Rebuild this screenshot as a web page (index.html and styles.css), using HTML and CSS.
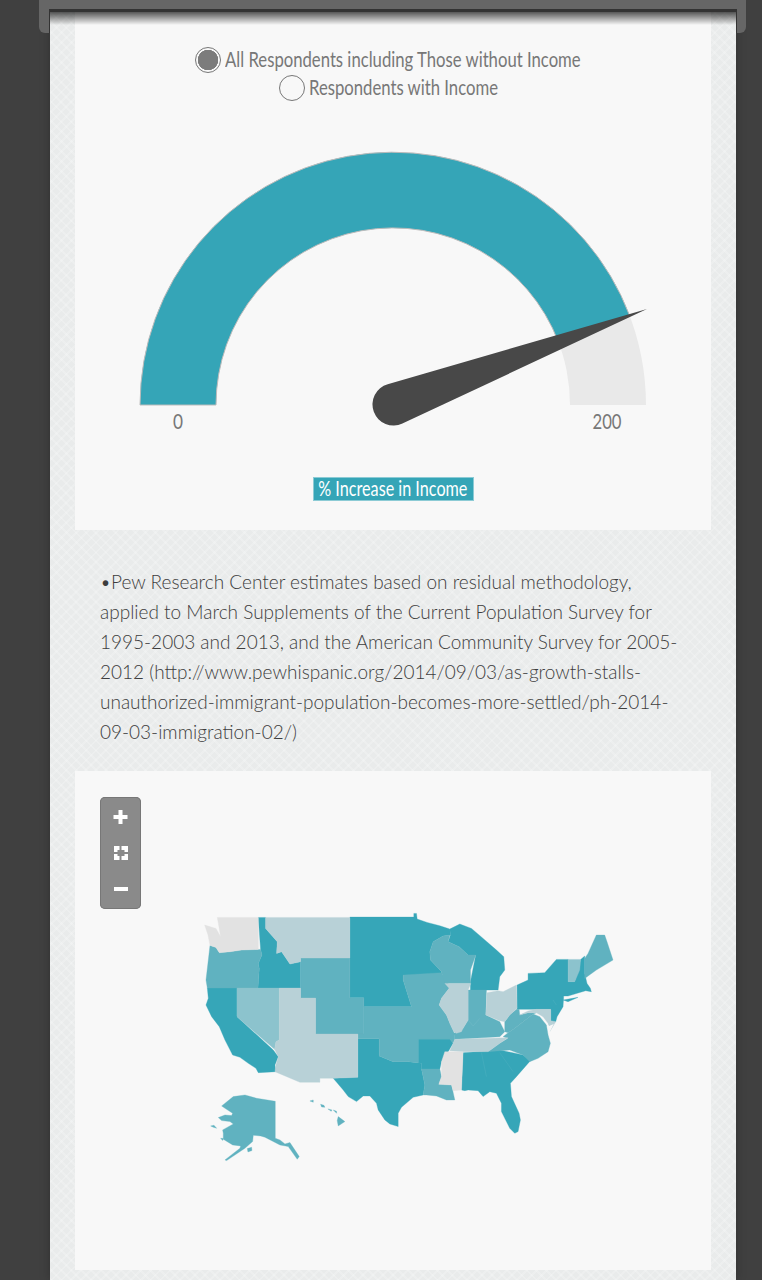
FILE: index.html
```html
<!DOCTYPE html>
<html lang="en">
<head>
    <meta charset="UTF-8">
    <meta name="viewport" content="width=device-width, initial-scale=1.0">
    <title>Immigration and Income</title>
    <link rel="stylesheet" href="styles.css">
</head>
<body>
    <div class="topbar"><div class="topbar-slot"></div></div>

    <div class="paper">
        <div class="card gauge-card">
            <form class="radios">
                <label><input type="radio" name="group" checked><span class="radio-text wide">All Respondents including Those without Income</span></label>
                <label><input type="radio" name="group"><span class="radio-text short">Respondents with Income</span></label>
            </form>
            <svg class="gauge" viewBox="75 102 636 364">
                <path class="gauge-track" d="M140 405A253 253 0 0 1 646 405H570A177 177 0 0 0 216 405Z"/>
                <path class="gauge-value" d="M140 405A253 253 0 0 1 629.6 315.6L558.6 342.4A177 177 0 0 0 216 405Z"/>
                <path class="gauge-needle" d="M647 309L387.700 384.300A21 21 0 1 0 402.400 423.500Z"/>
                <text class="gauge-label" x="178" y="429" textLength="10" lengthAdjust="spacingAndGlyphs">0</text>
                <text class="gauge-label" x="607" y="429" textLength="29" lengthAdjust="spacingAndGlyphs">200</text>
            </svg>
            <div class="gauge-title"><span>% Increase in Income</span></div>
        </div>

        <p class="source">•Pew Research Center estimates based on residual methodology, applied to March Supplements of the Current Population Survey for 1995-2003 and 2013, and the American Community Survey for 2005-2012 (http://www.pewhispanic.org/2014/09/03/as-growth-stalls-unauthorized-immigrant-population-becomes-more-settled/ph-2014-09-03-immigration-02/)</p>

        <div class="card map-card">
            <div class="zoom-controls">
                <svg viewBox="0 0 41 112" width="41" height="112">
                    <path class="zoom-icon" d="M18.500 13h4v5h5v4h-5v5h-4v-5h-5v-4h5z"/>
                    <path class="zoom-icon" d="M14 49h5.500v4h-2v2h-3.500zM21.500 49H28v6h-3.500v-2h-3zM14 57h3.500v2h2v4H14zM24.500 57H28v6h-6.500v-4h3z"/>
                    <rect class="zoom-icon" x="14" y="90" width="14" height="4"/>
                </svg>
            </div>
            <svg class="map" viewBox="0 0 1300 840">
                <g class="s1">
                    <path d="M52 264H141V350L250 450L265 470L255 495L258 515L205 518L198 505L175 490L150 472L128 465L105 420L88 380L65 350L48 315L55 295Z"/>
                    <path d="M205 52H227V85L262 125L260 160L275 155L300 192L332 185V264H204L208 205L205 190L216 165L212 148Z"/>
                    <path d="M480 51H672V40H680L682 57L712 67L750 77L780 87L782 105L760 108L730 125L720 155L722 180L755 215L755 225L640 225L640 240L665 320H522V293H480Z"/>
                    <path d="M775 125L782 105L780 87L810 72L845 85L880 115L920 150L942 170L945 210L930 230L925 270H842V245L858 165H835L808 140Z"/>
                    <path d="M504 416H568V468L610 485H655L685 488L695 490V507L700 530L705 555L700 585L670 592L635 622L625 640V680L600 672L585 660L565 630L560 610L540 588H520L500 605L475 590L460 570L430 535L504 532Z"/>
                    <path d="M685 415H780L790 430L775 455L755 485L750 507H695V490L685 488Z"/>
                    <path d="M820 458L930 450L1000 465L1022 482L980 530L962 550L965 590L988 640L992 660L985 695L975 700L960 685L935 635L935 610L920 580L900 575L880 590L865 572L835 570L825 572L815 570Z"/>
                    <path d="M982 255L1015 240V220L1065 218L1100 178H1135V245H1155L1173 178L1185 168V220L1192 250L1202 265L1205 275L1188 272L1135 288L1122 288L1120 320L1102 350L1098 365L1083 365L1083 328H982Z"/>
                    <path d="M1120 300L1165 292L1135 305Z"/>
                </g>
                <g class="s2">
                    <path d="M60 136L78 142L88 158L120 155L155 150L212 148L216 165L205 190L208 205L204 264H52L48 240L55 180Z"/>
                    <path d="M332 174H480V294H522V402H377V294H332Z"/>
                    <path d="M522 320H665L640 240V225L755 218L775 250L778 265L755 295L748 315L770 345L780 370L792 395L795 418L790 430L780 418H685V488L655 485H610L568 468V416H504V402H522Z"/>
                    <path d="M780 105L775 125L808 140L835 165H858L842 210V250H765L755 215L722 180L720 155L730 125L760 108Z"/>
                    <path d="M835 270H890L888 345L930 365L945 395L930 410L795 418L792 400L820 385L835 360Z"/>
                    <path d="M945 365L960 345L980 328H988L990 345L1015 338H1040L1030 342L975 385L955 398L945 395Z"/>
                    <path d="M955 415L930 430L895 455L960 450L1000 465L1020 485L1045 475L1075 455L1082 430L1075 405L1070 375L1050 350L1030 342L975 385L955 398L940 410Z"/>
                    <path d="M1185 175L1195 160L1220 105L1245 105L1252 125L1270 180L1220 210L1185 235Z"/>
                    <path d="M695 507H750L755 530L747 553L785 555L795 600H770L740 588L710 585H700L705 555L700 530Z"/>
                    <path d="M95 618L130 590L165 585L200 595L256 604V715L270 720L285 732L300 728L328 770L322 778L295 740L270 735L225 712L212 708L190 706L188 725L165 745L110 782L105 780L150 745L152 738L128 735L100 718V700L98 690L130 672L120 665L95 662L85 653L105 645L125 647L128 640L105 625Z"/>
                    <path d="M62 678L72 676L80 685L70 682ZM92 715L100 716L98 722ZM172 746L185 742L186 752L174 756ZM360 603L370 600V607ZM392 613L402 616L405 622L395 621ZM414 627L426 630L424 634ZM430 630L440 634V640ZM445 650L465 665L445 678L442 662Z"/>
                </g>
                <g class="s3">
                    <path d="M141 264H268V420L258 425L254 448L141 350Z"/>
                    <path d="M1135 178H1173L1170 210L1155 245H1135Z"/>
                </g>
                <g class="s4">
                    <path d="M227 52H480V174H332V185L300 192L275 155L260 160L262 125L227 85Z"/>
                    <path d="M268 264H332V294H377V402H504V532L430 535H390V547H330L255 515L258 495L265 470L254 448L258 425L268 420Z"/>
                    <path d="M765 250H843L835 270V360L820 385L815 395L800 400L792 395L780 370L770 345L748 315L755 295L778 265Z"/>
                    <path d="M892 278L925 272L940 275L980 255L982 325L960 345L945 365L930 362L888 345Z"/>
                    <path d="M795 418L955 413L930 430L895 455H820L780 452L790 430Z"/>
                    <path d="M990 345L1015 333L1040 328H1083V362L1098 365L1080 395L1075 370L1060 350L1040 338H1015Z"/>
                </g>
                <g class="s5">
                    <path d="M82 52H205V148L155 150L120 155L88 158L78 142L60 136L54 105L44 75L78 85L92 110Z"/>
                    <path d="M765 455H820L815 570L790 572L785 555L747 553L755 530L755 485Z"/>
                </g>
                <path class="bay" d="M1068 365L1078 378L1092 372L1078 400L1075 385Z"/>
                <path class="state-lines" d="M875 458L890 530M930 458L970 515M835 360L850 378L870 355M945 395L955 398M1090 300L1100 315"/>
            </svg>
        </div>
    </div>
</body>
</html>
```

FILE: styles.css
```css
html, body {
    margin: 0;
    padding: 0;
    height: 1280px;
    overflow: hidden;
}
body {
    background-color: #404040;
    font-family: Lato, "Liberation Sans", sans-serif;
}
.topbar {
    position: fixed;
    top: 0;
    left: 39px;
    width: 707px;
    height: 33px;
    box-sizing: border-box;
    border: solid #666;
    border-width: 9px 9px 0 10px;
    border-radius: 0 0 6px 6px;
    z-index: 10;
}
.topbar-slot {
    height: 100%;
    box-sizing: border-box;
    border: solid #333;
    border-width: 3px 1px 0;
    background: linear-gradient(rgba(0, 0, 0, 0.65), rgba(0, 0, 0, 0) 13px);
}
.paper {
    width: 636px;
    margin-left: 50px;
    padding: 0 25px 10px;
    background-color: #e9ebeb;
    background-image:
        repeating-linear-gradient(45deg, rgba(255, 255, 255, 0.18) 0 2px, rgba(0, 0, 0, 0) 2px 7px),
        repeating-linear-gradient(-45deg, rgba(255, 255, 255, 0.18) 0 2px, rgba(0, 0, 0, 0) 2px 7px);
    box-shadow: 0 0 10px rgba(0, 0, 0, 0.25);
}
.card {
    background-color: #f8f8f8;
}
.gauge-card {
    padding: 46px 0 29px;
}
.radios label {
    display: flex;
    justify-content: center;
    align-items: center;
    height: 28px;
    padding-right: 10px;
    font-size: 21px;
    color: #777;
}
.radios input {
    appearance: none;
    width: 26px;
    height: 26px;
    margin: 0 4px 0 0;
    border: 1px solid #777;
    border-radius: 50%;
    background-color: #f8f8f8;
}
.radios input:checked {
    background: radial-gradient(circle, #7c7c7c 0 10px, #f8f8f8 10.500px);
}
.radio-text {
    margin-bottom: 3px;
    white-space: nowrap;
    transform: scaleX(0.795);
    transform-origin: left;
}
.radio-text.wide {
    width: 356px;
}
.radio-text.short {
    width: 188px;
}
.gauge {
    display: block;
    width: 636px;
    height: 364px;
    margin-bottom: 11px;
}
.gauge-track {
    fill: #e9e9e9;
}
.gauge-value {
    fill: #35a5b7;
    stroke: #bbb;
    stroke-width: 1;
}
.gauge-needle {
    fill: #484848;
}
.gauge-label {
    font-size: 21px;
    fill: #777;
    text-anchor: middle;
}
.gauge-title {
    display: flex;
    justify-content: center;
    box-sizing: border-box;
    width: 161px;
    height: 24px;
    margin: 0 auto;
    line-height: 20px;
    background-color: #35a5b7;
    border: 1px solid #8ccbd5;
    color: #fff;
    font-size: 21px;
}
.gauge-title span {
    white-space: nowrap;
    transform: scaleX(0.77);
}
.source {
    margin: 0;
    padding: 37px 25px 24px;
    font-weight: 300;
    font-size: 19px;
    line-height: 30px;
    color: #3d3d3d;
}
.map-card {
    position: relative;
    height: 499px;
    padding-top: 129px;
    box-sizing: border-box;
}
.zoom-controls {
    position: absolute;
    top: 26px;
    left: 25px;
    width: 41px;
    height: 112px;
    border-radius: 5px;
    background-color: #8a8a8a;
    box-shadow: inset 0 0 0 1px #777;
}
.zoom-controls svg {
    display: block;
}
.zoom-icon {
    fill: #fff;
}
.map {
    display: block;
    width: 433px;
    height: 280px;
    margin-left: 115px;
}
.s1 { fill: #36a6b8; stroke: #36a6b8; }
.s2 { fill: #60b2c0; stroke: #60b2c0; }
.s3 { fill: #8cc3cd; stroke: #8cc3cd; }
.s4 { fill: #b8d1d7; stroke: #b8d1d7; }
.s5 { fill: #e2e2e2; stroke: #e2e2e2; }
.bay {
    fill: #f8f8f8;
}
.state-lines {
    fill: none;
    stroke: rgba(255, 255, 255, 0.12);
    stroke-width: 1.500;
}
```
